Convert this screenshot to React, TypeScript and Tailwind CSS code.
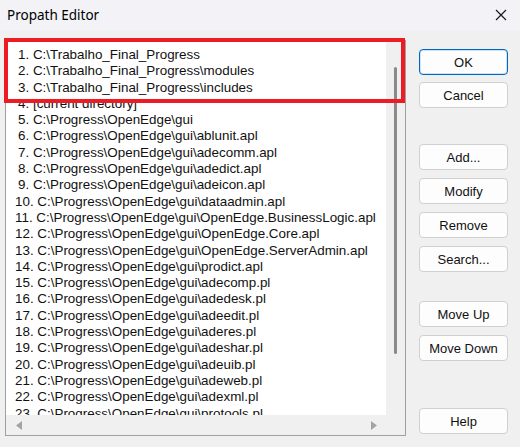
import React from "react";

const paths = [
  "C:\\Trabalho_Final_Progress",
  "C:\\Trabalho_Final_Progress\\modules",
  "C:\\Trabalho_Final_Progress\\includes",
  "[current directory]",
  "C:\\Progress\\OpenEdge\\gui",
  "C:\\Progress\\OpenEdge\\gui\\ablunit.apl",
  "C:\\Progress\\OpenEdge\\gui\\adecomm.apl",
  "C:\\Progress\\OpenEdge\\gui\\adedict.apl",
  "C:\\Progress\\OpenEdge\\gui\\adeicon.apl",
  "C:\\Progress\\OpenEdge\\gui\\dataadmin.apl",
  "C:\\Progress\\OpenEdge\\gui\\OpenEdge.BusinessLogic.apl",
  "C:\\Progress\\OpenEdge\\gui\\OpenEdge.Core.apl",
  "C:\\Progress\\OpenEdge\\gui\\OpenEdge.ServerAdmin.apl",
  "C:\\Progress\\OpenEdge\\gui\\prodict.apl",
  "C:\\Progress\\OpenEdge\\gui\\adecomp.pl",
  "C:\\Progress\\OpenEdge\\gui\\adedesk.pl",
  "C:\\Progress\\OpenEdge\\gui\\adeedit.pl",
  "C:\\Progress\\OpenEdge\\gui\\aderes.pl",
  "C:\\Progress\\OpenEdge\\gui\\adeshar.pl",
  "C:\\Progress\\OpenEdge\\gui\\adeuib.pl",
  "C:\\Progress\\OpenEdge\\gui\\adeweb.pl",
  "C:\\Progress\\OpenEdge\\gui\\adexml.pl",
  "C:\\Progress\\OpenEdge\\gui\\protools.pl",
];

function DlgButton({ label, className = "", primary = false }: { label: string; className?: string; primary?: boolean }) {
  return (
    <button
      type="button"
      className={
        "h-[26px] w-[89px] rounded-[4px] bg-[#fdfdfd] text-[13px] leading-none text-[#111] " +
        (primary ? "border border-[#0067c0] shadow-[inset_0_0_0_1px_#cfe3f6] " : "border border-[#d0d0d0] ") +
        className
      }
    >
      {label}
    </button>
  );
}

export default function App() {
  return (
    <div
      className="flex h-[447px] w-[520px] flex-col overflow-hidden bg-[#f0f0f0]"
      style={{ fontFamily: '"Liberation Sans", Arial, sans-serif' }}
    >
      {/* title bar */}
      <div className="flex h-[31px] shrink-0 items-center justify-between bg-[#f3f2f7] pl-[7px] pr-[10px]">
        <span className="text-[13.5px] text-black" style={{ fontFamily: '"Noto Sans", sans-serif' }}>
          Propath Editor
        </span>
        <svg width="12" height="12" viewBox="0 0 12 12" className="mr-[3px] mt-[-2px]">
          <path d="M1 1 L11 11 M11 1 L1 11" stroke="#1a1a1a" strokeWidth="1.2" />
        </svg>
      </div>

      <div className="flex flex-1">
        {/* list box */}
        <div className="relative ml-[5px] mt-[9px] h-[396px] w-[401px]">
          <div className="flex h-full w-full flex-col border border-[#a0a0a0] bg-white">
            <div className="flex flex-1 overflow-hidden">
              <div className="flex-1 overflow-hidden pt-[6px] text-[13.4px] leading-[16.3px] text-[#111]">
                {paths.map((p, i) => (
                  <div key={i} className={"whitespace-nowrap " + (i < 9 ? "pl-[12px]" : "pl-[9px]")}>
                    {i + 1}. {p}
                  </div>
                ))}
              </div>
              {/* vertical scrollbar */}
              <div className="flex w-[19px] shrink-0 justify-center bg-[#f0f0f0] pt-[26px]">
                <div className="h-[287px] w-[3px] rounded-full bg-[#8a8a8a]" />
              </div>
            </div>
            {/* horizontal scrollbar */}
            <div className="flex h-[20px] shrink-0 items-center justify-between bg-[#f0f0f0] pl-[10px] pr-[28px]">
              <svg width="7" height="9" viewBox="0 0 7 9">
                <path d="M6 0 L0 4.5 L6 9 Z" fill="#a3a3a3" />
              </svg>
              <svg width="7" height="9" viewBox="0 0 7 9">
                <path d="M1 0 L7 4.5 L1 9 Z" fill="#a3a3a3" />
              </svg>
            </div>
          </div>
          {/* red annotation */}
          <div className="pointer-events-none absolute left-[-1px] top-[-2px] h-[65px] w-[401px] border-[4px] border-[#ed1c24]" />
        </div>

        {/* buttons */}
        <div className="ml-[13px] flex flex-col">
          <DlgButton label="OK" primary className="mt-[18px]" />
          <DlgButton label="Cancel" className="mt-[7px]" />
          <DlgButton label="Add..." className="mt-[36px]" />
          <DlgButton label="Modify" className="mt-[8px]" />
          <DlgButton label="Remove" className="mt-[8px]" />
          <DlgButton label="Search..." className="mt-[8px]" />
          <DlgButton label="Move Up" className="mt-[29px]" />
          <DlgButton label="Move Down" className="mt-[8px]" />
          <DlgButton label="Help" className="mt-[47px]" />
        </div>
      </div>
    </div>
  );
}
